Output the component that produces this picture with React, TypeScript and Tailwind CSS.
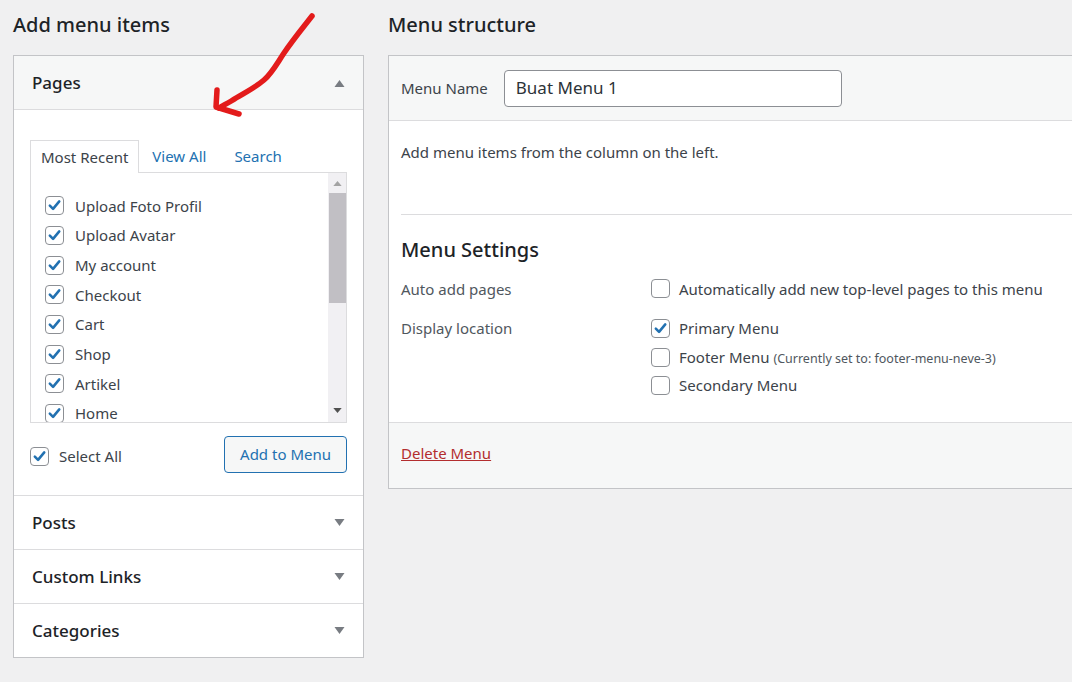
import React from 'react';

const FONT = { fontFamily: '"Noto Sans", "Open Sans", Arial, sans-serif' };

const Check = ({ checked }: { checked: boolean }) => (
  <span className="flex h-[19px] w-[19px] shrink-0 items-center justify-center rounded-[4px] border border-[#8c8f94] bg-white">
    {checked && (
      <svg viewBox="0 0 20 20" className="h-[19px] w-[19px]">
        <path d="M4.5 10.2 L8.3 14 L15.6 5.2" fill="none" stroke="#2271b1" strokeWidth="3" strokeLinecap="round" strokeLinejoin="round" />
      </svg>
    )}
  </span>
);

const Tri = ({ up }: { up?: boolean }) => (
  <svg viewBox="0 0 10 8" className="h-[8px] w-[11px]">
    <path d={up ? 'M0 8 L5 1 L10 8 Z' : 'M0 0 L5 7 L10 0 Z'} fill="#787c82" />
  </svg>
);

const pages = ['Upload Foto Profil', 'Upload Avatar', 'My account', 'Checkout', 'Cart', 'Shop', 'Artikel', 'Home'];

const Section = ({ title }: { title: string }) => (
  <div className="flex h-[54px] items-center justify-between border-t border-[#dcdcde] bg-white pl-[18px] pr-[18px]">
    <span className="text-[17px] font-medium text-[#1d2327]">{title}</span>
    <Tri />
  </div>
);

export default function App() {
  return (
    <div className="relative h-[682px] w-[1072px] overflow-hidden bg-[#f0f0f1]" style={FONT}>
      <div className="flex gap-[24px] pl-[13px]">
        {/* Left column */}
        <div className="w-[351px] shrink-0">
          <h2 className="flex h-[55px] items-start pt-[10px] text-[20px] font-medium text-[#1d2327]">Add menu items</h2>
          <div className="border border-[#c3c4c7] bg-white">
            <div className="flex h-[53px] items-center justify-between bg-[#f6f7f7] pl-[18px] pr-[18px]">
              <span className="text-[17px] font-medium text-[#1d2327]">Pages</span>
              <Tri up />
            </div>
            <div className="border-t border-[#dcdcde] px-[16px] pb-[22px] pt-[30px]">
              <div className="flex h-[32px] items-stretch text-[15px]">
                <div className="relative -mb-px flex items-center border border-b-0 border-[#dcdcde] bg-white px-[10px] text-[#3c434a]">Most Recent</div>
                <div className="flex items-center pl-[13px] text-[#2271b1]">View All</div>
                <div className="flex items-center pl-[28px] text-[#2271b1]">Search</div>
              </div>
              <div className="flex h-[251px] overflow-hidden border border-[#dcdcde]">
                <div className="flex-1 overflow-hidden pl-[14px] pt-[18px]">
                  {pages.map((p) => (
                    <div key={p} className="flex h-[29.7px] items-center gap-[11px] text-[15px] text-[#3c434a]">
                      <Check checked />
                      <span>{p}</span>
                    </div>
                  ))}
                </div>
                <div className="flex w-[18px] flex-col items-center bg-[#f1f0f3]">
                  <div className="flex h-[20px] items-center justify-center">
                    <svg viewBox="0 0 10 6" className="h-[5px] w-[9px]"><path d="M0 6 L5 0 L10 6 Z" fill="#a3a3a3" /></svg>
                  </div>
                  <div className="h-[110px] w-[17px] bg-[#c1bfc4]" />
                  <div className="flex-1" />
                  <div className="flex h-[24px] items-center justify-center">
                    <svg viewBox="0 0 10 6" className="h-[5px] w-[9px]"><path d="M0 0 L5 6 L10 0 Z" fill="#505050" /></svg>
                  </div>
                </div>
              </div>
              <div className="mt-[13px] flex items-center justify-between">
                <label className="mt-[4px] flex items-center gap-[10px] text-[15px] text-[#3c434a]">
                  <Check checked />
                  Select All
                </label>
                <button className="h-[37px] rounded-[4px] border border-[#2271b1] bg-[#f6f7f7] px-[15px] text-[15px] text-[#2271b1]">Add to Menu</button>
              </div>
            </div>
            <Section title="Posts" />
            <Section title="Custom Links" />
            <Section title="Categories" />
          </div>
        </div>

        {/* Right column */}
        <div className="w-[720px] shrink-0">
          <h2 className="flex h-[55px] items-start pt-[10px] text-[20px] font-medium text-[#1d2327]">Menu structure</h2>
          <div className="border border-[#c3c4c7] bg-white">
            <div className="flex h-[64px] items-center gap-[16px] bg-[#f6f7f7] pl-[12px]">
              <span className="text-[15px] text-[#3c434a]">Menu Name</span>
              <div className="flex h-[37px] w-[338px] items-center rounded-[4px] border border-[#8c8f94] bg-white pl-[11px] text-[17px] text-[#2c3338]">Buat Menu 1</div>
            </div>
            <div className="border-t border-[#dcdcde] px-[12px]">
              <p className="pt-[20px] text-[15px] text-[#3c434a]">Add menu items from the column on the left.</p>
              <div className="mt-[50px] border-t border-[#dcdcde]" />
              <h3 className="pt-[20px] text-[20px] font-medium text-[#1d2327]">Menu Settings</h3>
              <div className="mt-[13px] flex text-[15px]">
                <div className="w-[250px] text-[#50575e]">Auto add pages</div>
                <label className="flex items-center gap-[9px] text-[#3c434a]">
                  <Check checked={false} />
                  Automatically add new top-level pages to this menu
                </label>
              </div>
              <div className="mt-[17px] flex pb-[26px] text-[15px]">
                <div className="w-[250px] text-[#50575e]">Display location</div>
                <div className="flex flex-col gap-[7.5px] pt-[1px]">
                  <label className="flex h-[21px] items-center gap-[9px] text-[#3c434a]">
                    <Check checked />
                    Primary Menu
                  </label>
                  <label className="flex h-[21px] items-center gap-[9px] text-[#3c434a]">
                    <Check checked={false} />
                    <span>
                      Footer Menu <span className="text-[12.5px] text-[#50575e]">(Currently set to: footer-menu-neve-3)</span>
                    </span>
                  </label>
                  <label className="flex h-[21px] items-center gap-[9px] text-[#3c434a]">
                    <Check checked={false} />
                    Secondary Menu
                  </label>
                </div>
              </div>
            </div>
            <div className="flex h-[66px] items-center border-t border-[#dcdcde] bg-[#f6f7f7] pb-[4px] pl-[12px]">
              <a className="text-[15px] text-[#b32d2e] underline">Delete Menu</a>
            </div>
          </div>
        </div>
      </div>

      {/* hand-drawn annotation arrow */}
      <svg className="pointer-events-none absolute left-0 top-0" width="1072" height="682">
        <path d="M312 16 C301 30 292 41 284 53 C276 65 272 73 264 80 C256 87 246 92 236 98 C230 102 224 105 219 108" fill="none" stroke="#e31b1b" strokeWidth="5.5" strokeLinecap="round" />
        <path d="M217 90 L216 107 L239 114" fill="none" stroke="#e31b1b" strokeWidth="5.5" strokeLinecap="round" strokeLinejoin="round" />
      </svg>
    </div>
  );
}
